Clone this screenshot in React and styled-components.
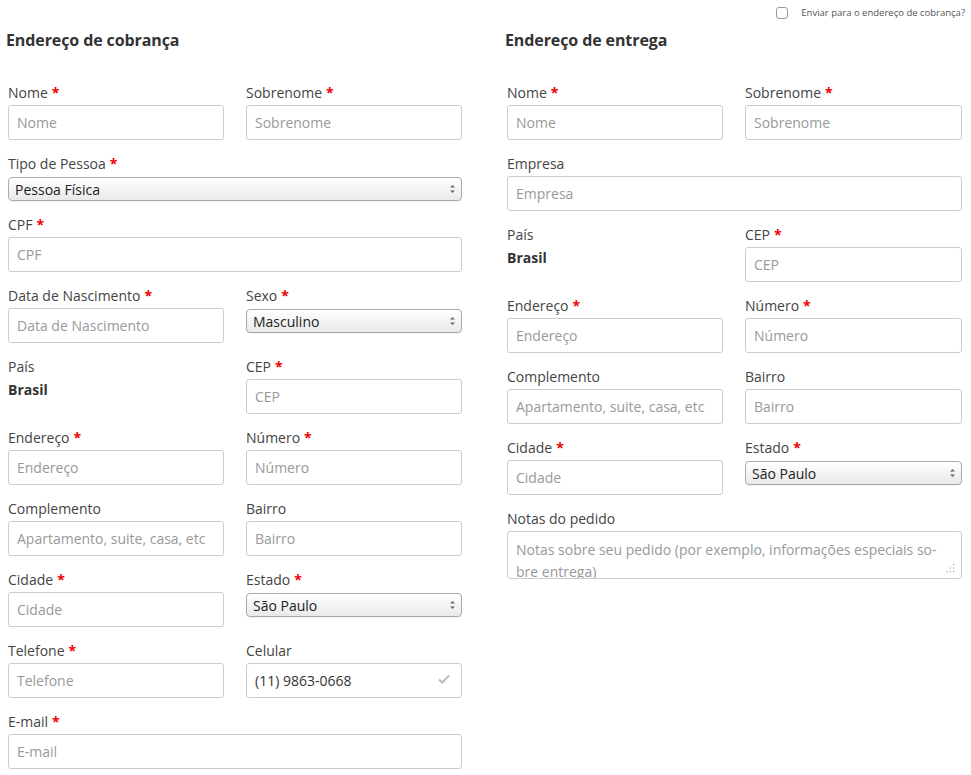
import React from "react";
import styled, { createGlobalStyle } from "styled-components";

const Global = createGlobalStyle`
  html, body { margin: 0; padding: 0; background: #fff; }
  body { font-family: "Open Sans", "Noto Sans", sans-serif; color: #444; }
  * { box-sizing: border-box; }
`;

const Page = styled.div`
  width: 971px;
`;

const TopBar = styled.div`
  height: 25px;
  padding-right: 6px;
  display: flex;
  justify-content: flex-end;
  align-items: center;
`;

const Check = styled.span`
  width: 12px;
  height: 12px;
  border: 1px solid #999;
  border-radius: 3px;
  background: #fff;
  margin-right: 13px;
`;

const SmallText = styled.span`
  font-size: 9.5px;
  color: #555;
`;

const Columns = styled.div`
  display: grid;
  grid-template-columns: 456px 457px;
  column-gap: 43px;
  padding-left: 6px;
`;

const Column = styled.div`
  display: flex;
  flex-direction: column;
`;

const Heading = styled.h3`
  margin: 3px 0 30px;
  font-size: 16px;
  line-height: 24px;
  font-weight: 700;
  color: #333;
  letter-spacing: -0.1px;
`;

const Grid = styled.div`
  display: grid;
  grid-template-columns: 216px 1fr;
  column-gap: 22px;
  row-gap: 13px;
  padding-left: 2px;
`;

const Field = styled.div`
  grid-column: ${(p) => (p.$full ? "1 / -1" : "auto")};
  display: flex;
  flex-direction: column;
`;

const Label = styled.label`
  display: block;
  padding-top: 1px;
  font-size: 14px;
  line-height: 20px;
  color: #444;
`;

const Req = styled.span`
  color: #e00;
  font-weight: 700;
  margin-left: 4px;
`;

const Input = styled.input`
  margin-top: 2px;
  width: 100%;
  height: 35px;
  border: 1px solid #ccc;
  border-radius: 3px;
  padding: 0 8px;
  font-family: inherit;
  font-size: 14px;
  color: #333;
  background: #fff;
  outline: none;
  &::placeholder { color: #999; }
`;

const InputWrap = styled.div`
  position: relative;
`;

const CheckMark = styled.svg`
  position: absolute;
  right: 12px;
  top: 13px;
`;

const SelectWrap = styled.div`
  position: relative;
  margin-top: 3px;
`;

const Select = styled.select`
  width: 100%;
  height: 24px;
  appearance: none;
  -webkit-appearance: none;
  border: 1px solid #aaa;
  border-radius: 4px;
  padding: 0 20px 0 6px;
  font-family: inherit;
  font-size: 14px;
  color: #222;
  background: linear-gradient(#ffffff, #e9e9e9);
  box-shadow: 0 1px 1px rgba(0, 0, 0, 0.06);
  outline: none;
`;

const Arrows = styled.svg`
  position: absolute;
  right: 6px;
  top: 7px;
  pointer-events: none;
`;

const Static = styled.div`
  margin-top: 3px;
  font-size: 14px;
  line-height: 20px;
  font-weight: 700;
  color: #333;
`;

const AreaWrap = styled.div`
  position: relative;
  margin-top: 2px;
`;

const TextArea = styled.textarea`
  display: block;
  width: 100%;
  height: 48px;
  border: 1px solid #ccc;
  border-radius: 3px;
  padding: 7px 8px 0;
  font-family: inherit;
  font-size: 14px;
  line-height: 22px;
  color: #333;
  outline: none;
  resize: none;
  overflow: hidden;
  &::placeholder { color: #999; }
`;

const Grip = styled.svg`
  position: absolute;
  right: 7px;
  bottom: 6px;
  pointer-events: none;
`;

function LabelText({ text, req }) {
  return (
    <Label>
      {text}
      {req && <Req>*</Req>}
    </Label>
  );
}

function TextField({ label, req, full, placeholder }) {
  return (
    <Field $full={full}>
      <LabelText text={label} req={req} />
      <Input placeholder={placeholder ?? label} />
    </Field>
  );
}

function SelectField({ label, req, full, value }) {
  return (
    <Field $full={full}>
      <LabelText text={label} req={req} />
      <SelectWrap>
        <Select defaultValue={value}>
          <option>{value}</option>
        </Select>
        <Arrows width="7" height="10" viewBox="0 0 7 10">
          <path d="M3.5 1 L6 3.5 L1 3.5 Z" fill="#666" />
          <path d="M3.5 9 L6 6.5 L1 6.5 Z" fill="#666" />
        </Arrows>
      </SelectWrap>
    </Field>
  );
}

function StaticField({ label, value }) {
  return (
    <Field>
      <LabelText text={label} />
      <Static>{value}</Static>
    </Field>
  );
}

export default function App() {
  return (
    <Page>
      <Global />
      <TopBar>
        <Check />
        <SmallText>Enviar para o endereço de cobrança?</SmallText>
      </TopBar>
      <Columns>
        <Column>
          <Heading>Endereço de cobrança</Heading>
          <Grid>
            <TextField label="Nome" req />
            <TextField label="Sobrenome" req />
            <SelectField label="Tipo de Pessoa" req full value="Pessoa Física" />
            <TextField label="CPF" req full />
            <TextField label="Data de Nascimento" req />
            <SelectField label="Sexo" req value="Masculino" />
            <StaticField label="País" value="Brasil" />
            <TextField label="CEP" req />
            <TextField label="Endereço" req />
            <TextField label="Número" req />
            <TextField label="Complemento" placeholder="Apartamento, suite, casa, etc" />
            <TextField label="Bairro" />
            <TextField label="Cidade" req />
            <SelectField label="Estado" req value="São Paulo" />
            <TextField label="Telefone" req />
            <Field>
              <LabelText text="Celular" />
              <InputWrap>
                <Input defaultValue="(11) 9863-0668" />
                <CheckMark width="12" height="10" viewBox="0 0 12 10">
                  <path d="M1 5.5 L4.2 8.5 L11 1.5" fill="none" stroke="#bbb" strokeWidth="2" />
                </CheckMark>
              </InputWrap>
            </Field>
            <TextField label="E-mail" req full />
          </Grid>
        </Column>
        <Column>
          <Heading>Endereço de entrega</Heading>
          <Grid>
            <TextField label="Nome" req />
            <TextField label="Sobrenome" req />
            <TextField label="Empresa" full />
            <StaticField label="País" value="Brasil" />
            <TextField label="CEP" req />
            <TextField label="Endereço" req />
            <TextField label="Número" req />
            <TextField label="Complemento" placeholder="Apartamento, suite, casa, etc" />
            <TextField label="Bairro" />
            <TextField label="Cidade" req />
            <SelectField label="Estado" req value="São Paulo" />
            <Field $full>
              <LabelText text="Notas do pedido" />
              <AreaWrap>
                <TextArea placeholder={"Notas sobre seu pedido (por exemplo, informações especiais so\u00ADbre entrega)"} />
                <Grip width="9" height="9" viewBox="0 0 9 9">
                  <rect x="7" y="0" width="1.2" height="1.2" fill="#aaa" />
                  <rect x="7" y="3.5" width="1.2" height="1.2" fill="#aaa" />
                  <rect x="3.5" y="3.5" width="1.2" height="1.2" fill="#aaa" />
                  <rect x="7" y="7" width="1.2" height="1.2" fill="#aaa" />
                  <rect x="3.5" y="7" width="1.2" height="1.2" fill="#aaa" />
                  <rect x="0" y="7" width="1.2" height="1.2" fill="#aaa" />
                </Grip>
              </AreaWrap>
            </Field>
          </Grid>
        </Column>
      </Columns>
    </Page>
  );
}
